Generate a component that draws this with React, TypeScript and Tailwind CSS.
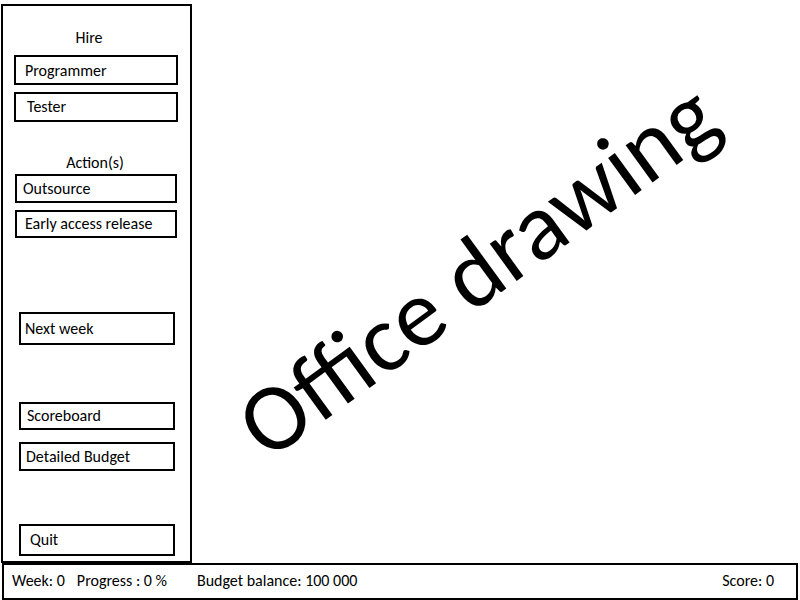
import type { ReactNode } from "react";

function MenuButton({ children, className }: { children: ReactNode; className: string }) {
  return (
    <button type="button" className={`block w-full cursor-pointer border-2 border-black bg-white text-left leading-5 ${className}`}>
      {children}
    </button>
  );
}

function Sidebar() {
  return (
    <nav aria-label="Game menu" className="flex w-[191px] shrink-0 flex-col border-2 border-black pb-[5px]">
      <section className="pt-[22px] pr-3 pl-[11px]">
        <h2 className="pr-3.5 text-center leading-5">Hire</h2>
        <div className="mt-[7px] flex flex-col gap-[7px]">
          <MenuButton className="h-[30px] pt-0.5 pl-[9px]">Programmer</MenuButton>
          <MenuButton className="h-[30px] pl-[11px]">Tester</MenuButton>
        </div>
      </section>
      <section className="pt-[31px] pr-[13px] pl-3">
        <h2 className="pr-0.5 text-center leading-5">Action(s)</h2>
        <div className="mt-px flex flex-col gap-[7px]">
          <MenuButton className="h-[29px] pl-1.5">Outsource</MenuButton>
          <MenuButton className="h-[28px] pl-2">Early access release</MenuButton>
        </div>
      </section>
      <div className="flex flex-1 flex-col pt-[74px] pr-[15px] pl-4">
        <MenuButton className="h-[33px] pl-1">Next week</MenuButton>
        <div className="mt-[57px] mb-[53px] flex flex-col gap-3">
          <MenuButton className="h-[28px] pl-1.5">Scoreboard</MenuButton>
          <MenuButton className="h-[29px] pl-[5px]">Detailed Budget</MenuButton>
        </div>
        <div className="mt-auto">
          <MenuButton className="h-[32px] pl-[9px]">Quit</MenuButton>
        </div>
      </div>
    </nav>
  );
}

export default function App() {
  return (
    <div className="flex min-h-screen flex-col bg-white pt-1 pr-0.5 pl-px font-[Calibri,Carlito,Lato,sans-serif] text-[16px] text-black">
      <div className="flex flex-1">
        <Sidebar />
        <main className="flex min-w-0 flex-1 items-center justify-center overflow-hidden pr-9 pb-7">
          <p className="-rotate-36 text-[96px] leading-none whitespace-nowrap">Office drawing</p>
        </main>
      </div>
      <footer className="ml-px flex h-[37px] items-center border-2 border-black pr-[22px] pb-px pl-2 leading-5">
        <span>Week: 0</span>
        <span className="ml-3">Progress : 0 %</span>
        <span className="ml-[30px]">Budget balance: 100 000</span>
        <span className="ml-auto">Score: 0</span>
      </footer>
    </div>
  );
}
